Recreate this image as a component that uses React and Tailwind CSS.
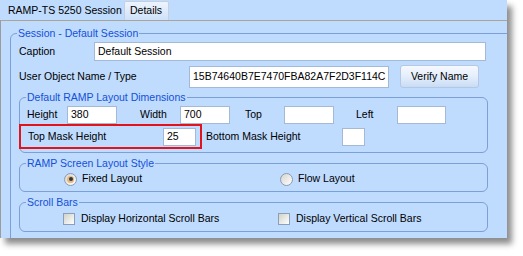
import React from "react";

const Field = ({ value = "", className = "" }) => (
  <div
    className={`bg-white border border-[#a3b9d6] flex items-center px-[3px] text-black ${className}`}
  >
    {value}
  </div>
);

const Radio = ({ checked }) => (
  <span className="w-[13px] h-[13px] rounded-full border border-[#8a9bb0] bg-gradient-to-br from-[#d6d4cc] to-white flex items-center justify-center">
    {checked && (
      <span className="w-[7px] h-[7px] rounded-full bg-[#e8b878] flex items-center justify-center">
        <span className="w-[4px] h-[4px] rounded-full bg-[#2a3a4a]" />
      </span>
    )}
  </span>
);

const Check = () => (
  <span className="w-[12px] h-[12px] border border-[#8a9fb8] bg-gradient-to-br from-[#d2d2ca] to-white" />
);

const Group = ({ title, className = "", children }) => (
  <fieldset className={`border border-[#7c9fd6] rounded-[6px] p-0 m-0 min-w-0 ${className}`}>
    <legend className="ml-[6px] px-[1px] text-[#1450d8] leading-[13px]">{title}</legend>
    {children}
  </fieldset>
);

export default function App() {
  return (
    <div className="w-[523px] h-[256px] bg-white font-['Liberation_Sans',Arial,sans-serif] text-[10.5px] text-black">
      <div className="w-[507px] h-[238px] bg-[#bfdbfe] shadow-[5px_6px_6px_rgba(0,0,0,0.45)] flex flex-col overflow-hidden">
        {/* tabs */}
        <div className="h-[20px] flex items-end shrink-0">
          <div className="w-[124px] h-[18px] pl-[8px] flex items-center">RAMP-TS 5250 Session</div>
          <div className="w-[45px] h-[19px] border border-b-0 border-[#c4d0e0] rounded-t-[2px] bg-gradient-to-b from-[#eef4fd] to-[#cfe1f8] pl-[5px] flex items-center">
            Details
          </div>
        </div>

        {/* panel */}
        <div className="flex-1 border-t border-t-[#aaa597] border-l border-l-[#9c9c9c] overflow-hidden">
          <Group title="Session - Default Session" className="ml-[9px] mt-[6px] w-[520px] h-[240px]">
            <div className="pl-[8px]">
              <div className="mt-[2px] h-[19px] flex items-center">
                <span className="w-[75px]">Caption</span>
                <Field value="Default Session" className="w-[392px] h-[19px]" />
              </div>
              <div className="mt-[4px] h-[23px] flex items-center">
                <span className="w-[170px]">User Object Name / Type</span>
                <Field value="15B74640B7E7470FBA82A7F2D3F114C" className="w-[200px] h-[22px]" />
                <button className="ml-[11px] w-[79px] h-[23px] border border-[#b4c8e4] rounded-[3px] bg-gradient-to-b from-[#f6f9fe] via-[#e4eefb] to-[#c9dcf5] text-black">
                  Verify Name
                </button>
              </div>

              <Group title="Default RAMP Layout Dimensions" className="mt-[3px] w-[469px]">
                <div className="pl-[7px] pb-[3px]">
                  <div className="mt-[2px] h-[18px] flex items-center">
                    <span className="w-[40px]">Height</span>
                    <Field value="380" className="w-[50px] h-[18px]" />
                    <span className="ml-[23px] w-[40px]">Width</span>
                    <Field value="700" className="w-[50px] h-[18px]" />
                    <span className="ml-[15px] w-[39px]">Top</span>
                    <Field className="w-[50px] h-[18px]" />
                    <span className="ml-[22px] w-[41px]">Left</span>
                    <Field className="w-[49px] h-[18px]" />
                  </div>
                  <div className="h-[25px] flex items-center">
                    <div className="-ml-[8px] w-[183px] h-[25px] border-2 border-[#e0141a] flex items-center pl-[7px]">
                      <span className="w-[135px]">Top Mask Height</span>
                      <Field value="25" className="w-[33px] h-[18px]" />
                    </div>
                    <span className="ml-[4px] w-[136px]">Bottom Mask Height</span>
                    <Field className="w-[23px] h-[18px]" />
                  </div>
                </div>
              </Group>

              <Group title="RAMP Screen Layout Style" className="mt-[4px] w-[469px]">
                <div className="pl-[44px] pb-[4px]">
                  <div className="mt-[1px] h-[16px] grid grid-cols-[216px_auto] items-center">
                    <label className="flex items-center gap-[5px]">
                      <Radio checked />
                      Fixed Layout
                    </label>
                    <label className="flex items-center gap-[5px]">
                      <Radio />
                      Flow Layout
                    </label>
                  </div>
                </div>
              </Group>

              <Group title="Scroll Bars" className="mt-[4px] w-[469px]">
                <div className="pl-[43px] pb-[4px]">
                  <div className="mt-[2px] h-[16px] grid grid-cols-[215px_auto] items-center">
                    <label className="flex items-center gap-[6px]">
                      <Check />
                      Display Horizontal Scroll Bars
                    </label>
                    <label className="flex items-center gap-[6px]">
                      <Check />
                      Display Vertical Scroll Bars
                    </label>
                  </div>
                </div>
              </Group>
            </div>
          </Group>
        </div>
      </div>
    </div>
  );
}
